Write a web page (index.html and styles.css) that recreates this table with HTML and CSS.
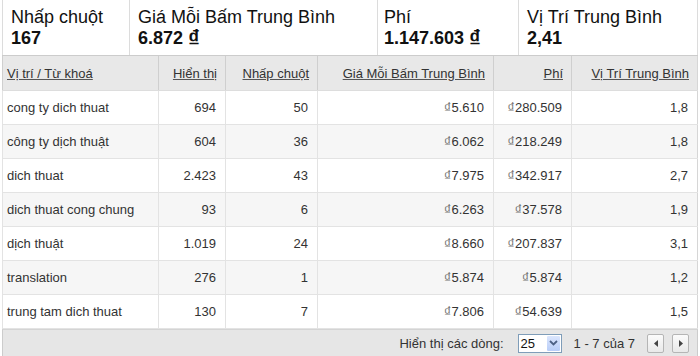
FILE: index.html
```html
<!DOCTYPE html>
<html lang="vi">
<head>
<meta charset="utf-8">
<title>Báo cáo từ khoá</title>
<link rel="stylesheet" href="styles.css">
</head>
<body>
<div class="report">
  <div class="metrics">
    <div class="metric m1"><div class="label">Nhấp chuột</div><div class="value">167</div></div>
    <div class="metric m2"><div class="label">Giá Mỗi Bấm Trung Bình</div><div class="value">6.872 <span class="vcur">₫</span></div></div>
    <div class="metric m3"><div class="label">Phí</div><div class="value">1.147.603 <span class="vcur">₫</span></div></div>
    <div class="metric m4"><div class="label">Vị Trí Trung Bình</div><div class="value">2,41</div></div>
  </div>
  <table class="grid">
    <colgroup>
      <col class="c1"><col class="c2"><col class="c3"><col class="c4"><col class="c5"><col class="c6">
    </colgroup>
    <thead>
      <tr>
        <th class="left"><a>Vị trí / Từ khoá</a></th>
        <th><a>Hiển thị</a></th>
        <th><a>Nhấp chuột</a></th>
        <th><a>Giá Mỗi Bấm Trung Bình</a></th>
        <th><a>Phí</a></th>
        <th><a>Vị Trí Trung Bình</a></th>
      </tr>
    </thead>
    <tbody>
      <tr><td class="left">cong ty dich thuat</td><td>694</td><td>50</td><td><span class="cur">₫</span>5.610</td><td><span class="cur">₫</span>280.509</td><td>1,8</td></tr>
      <tr><td class="left">công ty dịch thuật</td><td>604</td><td>36</td><td><span class="cur">₫</span>6.062</td><td><span class="cur">₫</span>218.249</td><td>1,8</td></tr>
      <tr><td class="left">dich thuat</td><td>2.423</td><td>43</td><td><span class="cur">₫</span>7.975</td><td><span class="cur">₫</span>342.917</td><td>2,7</td></tr>
      <tr><td class="left">dich thuat cong chung</td><td>93</td><td>6</td><td><span class="cur">₫</span>6.263</td><td><span class="cur">₫</span>37.578</td><td>1,9</td></tr>
      <tr><td class="left">dịch thuật</td><td>1.019</td><td>24</td><td><span class="cur">₫</span>8.660</td><td><span class="cur">₫</span>207.837</td><td>3,1</td></tr>
      <tr><td class="left">translation</td><td>276</td><td>1</td><td><span class="cur">₫</span>5.874</td><td><span class="cur">₫</span>5.874</td><td>1,2</td></tr>
      <tr><td class="left">trung tam dich thuat</td><td>130</td><td>7</td><td><span class="cur">₫</span>7.806</td><td><span class="cur">₫</span>54.639</td><td>1,5</td></tr>
    </tbody>
  </table>
  <div class="footer">
    <span class="rows-label">Hiển thị các dòng:</span>
    <div class="select">
      <span class="select-val">25</span>
      <span class="select-btn">
        <svg width="9" height="6" viewBox="0 0 9 6"><path d="M1 1 L4.5 4.5 L8 1" fill="none" stroke="#4d6185" stroke-width="1.8"/></svg>
      </span>
    </div>
    <span class="range">1 - 7 của 7</span>
    <div class="pager">
      <span class="pbtn"><svg width="4" height="7" viewBox="0 0 4 7"><path d="M4 0 L0 3.5 L4 7 Z" fill="#444"/></svg></span>
      <span class="pbtn"><svg width="4" height="7" viewBox="0 0 4 7"><path d="M0 0 L4 3.5 L0 7 Z" fill="#444"/></svg></span>
    </div>
  </div>
</div>
</body>
</html>
```
FILE: styles.css
```css
html, body {
  margin: 0;
  padding: 0;
  background: #ffffff;
}
body {
  font-family: "Liberation Sans", Arial, sans-serif;
  color: #222;
}
.report {
  width: 696px;
  margin-left: 2px;
}
.metrics {
  display: flex;
  height: 55px;
  border-left: 1px solid #dcdcdc;
  border-right: 1px solid #dcdcdc;
  box-sizing: border-box;
}
.metric {
  box-sizing: border-box;
  padding: 7px 0 0 8px;
  border-right: 1px solid #dcdcdc;
}
.metric:last-child { border-right: none; }
.m1 { width: 127px; }
.m2 { width: 248px; }
.m3 { width: 141px; padding-left: 6px; }
.m4 { width: 178px; }
.label {
  font-size: 18px;
  line-height: 21px;
  color: #111;
}
.value {
  font-size: 18px;
  line-height: 21px;
  height: 21px;
  font-weight: bold;
  color: #111;
}
.vcur {
  font-size: 23px;
  line-height: 0;
  vertical-align: -3px;
}
.grid {
  width: 696px;
  border-collapse: collapse;
  table-layout: fixed;
  font-size: 13px;
  border-left: 1px solid #d6d6d6;
  border-right: 1px solid #d6d6d6;
}
.c1 { width: 156px; }
.c2 { width: 67px; }
.c3 { width: 92px; }
.c4 { width: 176px; }
.c5 { width: 78px; }
.c6 { width: 126px; }
.grid th {
  height: 34px;
  background: #e8e8e8;
  border-top: 1px solid #cccccc;
  border-bottom: 1px solid #dddddd;
  border-left: 1px solid #cfcfcf;
  font-weight: normal;
  text-align: right;
  padding: 0 8px 0 4px;
  white-space: nowrap;
}
.grid th a {
  color: #333;
  text-decoration: underline;
  text-decoration-color: #555;
}
.grid td {
  height: 33px;
  border-bottom: 1px solid #e3e3e3;
  border-left: 1px solid #e3e3e3;
  text-align: right;
  padding: 0 9px 0 4px;
  color: #333;
  white-space: nowrap;
}
.grid .left {
  text-align: left;
  padding-left: 4px;
}
.grid tbody tr:nth-child(even) td {
  background: #f6f6f6;
}
.cur {
  color: #777;
  font-size: 15px;
  line-height: 0;
  vertical-align: -1px;
}
.footer {
  display: flex;
  align-items: center;
  justify-content: flex-end;
  height: 26px;
  background: #e6e6e6;
  border: 1px solid #cccccc;
  border-top-color: #d4d4d4;
  box-sizing: content-box;
  font-size: 13px;
  color: #333;
  padding-right: 8px;
}
.rows-label {
  margin-right: 14px;
}
.select {
  display: flex;
  align-items: stretch;
  width: 42px;
  height: 17px;
  border: 1px solid #7f9db9;
  background: #fff;
  box-sizing: content-box;
  margin-right: 12px;
}
.select-val {
  flex: 1;
  font-size: 13px;
  line-height: 17px;
  padding-left: 2px;
  color: #111;
}
.select-btn {
  width: 15px;
  display: flex;
  align-items: center;
  justify-content: center;
  background: linear-gradient(#dbe6fd, #b8cdf8);
  border: 1px solid #fff;
  border-radius: 2px;
  box-sizing: border-box;
}
.range {
  margin-right: 12px;
}
.pager {
  display: flex;
  gap: 8px;
}
.pbtn {
  display: flex;
  align-items: center;
  justify-content: center;
  width: 15px;
  height: 17px;
  border: 1px solid #b5b5b5;
  border-radius: 2px;
  background: linear-gradient(#fbfbfb, #e9e9e9);
}
```
